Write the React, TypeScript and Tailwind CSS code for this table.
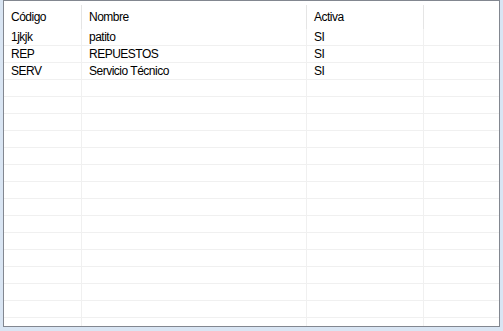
const rows: [string, string, string][] = [
  ["1jkjk", "patito", "SI"],
  ["REP", "REPUESTOS", "SI"],
  ["SERV", "Servicio Técnico", "SI"],
];

// pad with empty lines so the grid fills the list view
const filler = Array.from({ length: 16 }, () => ["", "", ""] as [string, string, string]);

const cols = ["w-[78px]", "w-[225px]", "w-[117px]"];

export default function App() {
  const all = [...rows, ...filler];
  return (
    <div
      className="h-[331px] w-[503px] bg-[#d9e5f3] px-[3px] pb-[4px]"
      style={{ fontFamily: '"Liberation Sans", Arial, sans-serif' }}
    >
      <div className="h-[327px] w-[497px] overflow-hidden border border-[#828790] bg-white text-[12px] tracking-[-0.5px] text-black">
        {/* column headers */}
        <div className="flex h-[28px]">
          {["Código", "Nombre", "Activa"].map((h, i) => (
            <div key={h} className={`flex ${cols[i]}`}>
              <span className="flex-1 pl-[7px] pt-[9px] leading-[14px]">{h}</span>
              <span className="mt-[4px] h-[24px] w-px bg-[#e5e5e5]" />
            </div>
          ))}
          <div className="flex-1" />
        </div>

        {all.map((r, idx) => (
          <div key={idx} className="flex h-[17px] border-b border-[#f0f0f0]">
            {r.map((c, i) => (
              <div
                key={i}
                className={`${cols[i]} truncate border-r border-[#f0f0f0] pl-[7px] leading-[16px]`}
              >
                {c}
              </div>
            ))}
            <div className="flex-1" />
          </div>
        ))}
      </div>
    </div>
  );
}
